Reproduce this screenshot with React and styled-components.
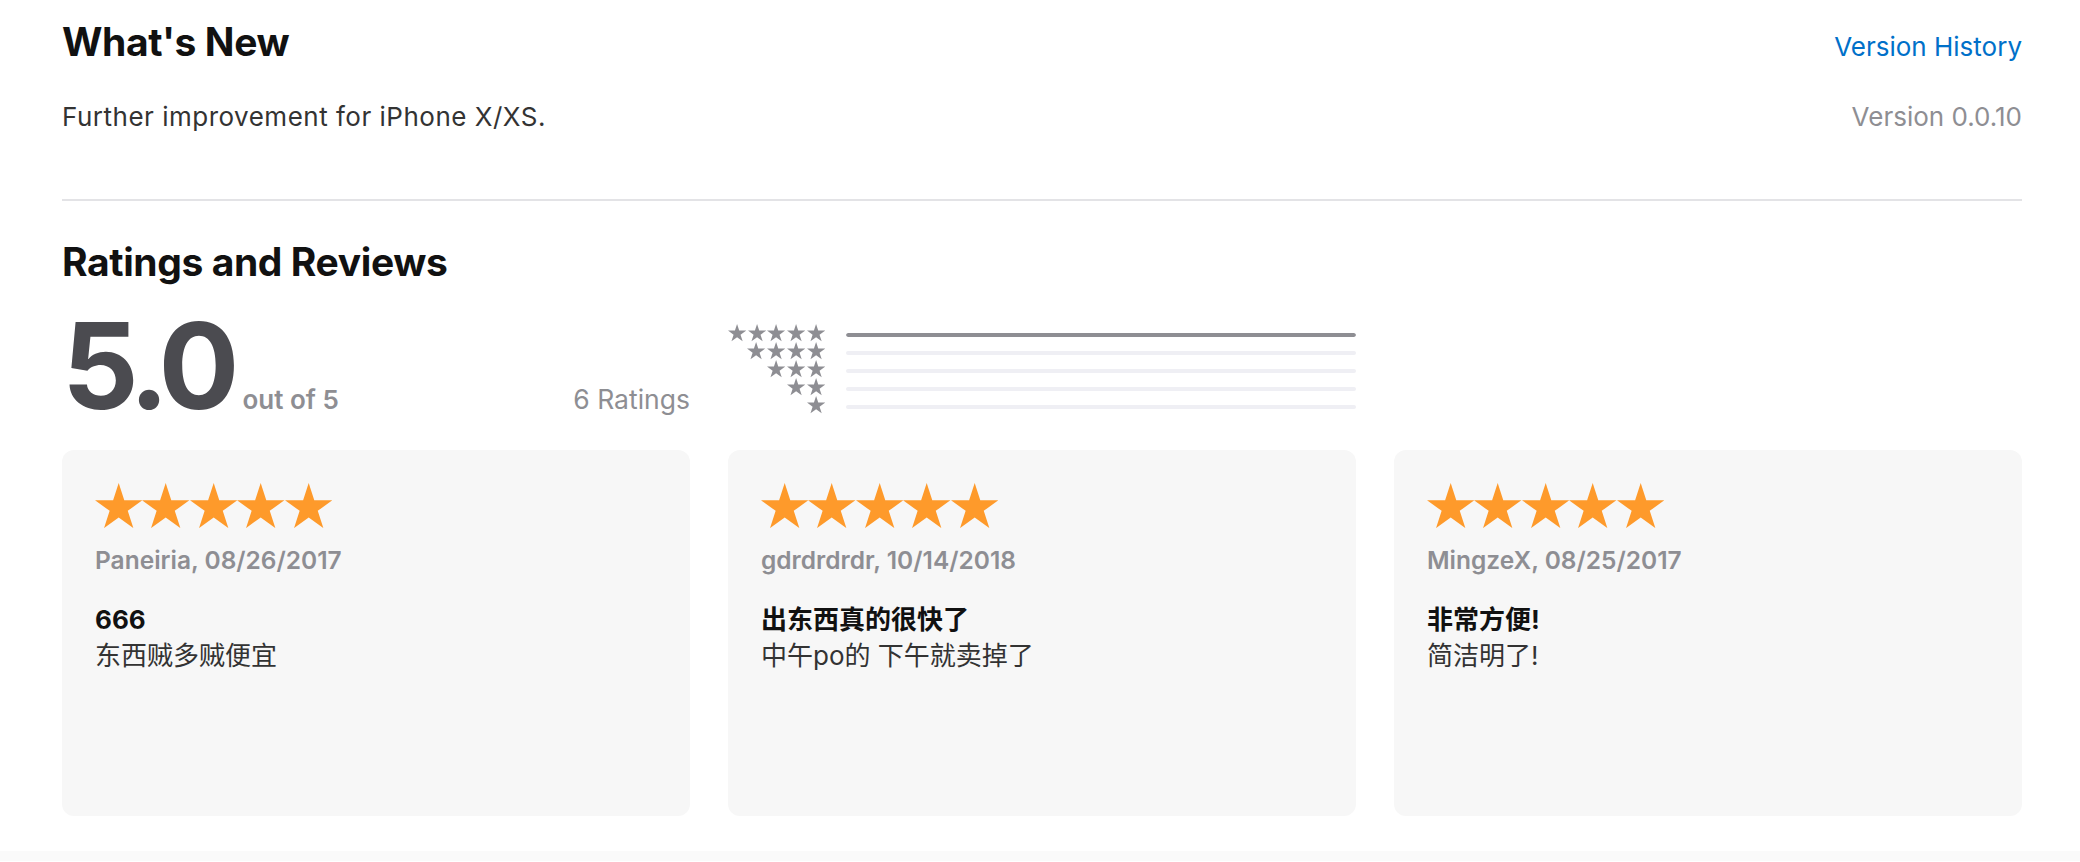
import React from "react";
import styled, { createGlobalStyle } from "styled-components";

const GlobalStyle = createGlobalStyle`
  html, body {
    margin: 0;
    padding: 0;
    background: #fff;
  }
  body {
    font-family: Inter, "Noto Sans CJK SC", sans-serif;
    -webkit-font-smoothing: antialiased;
  }
`;

const Page = styled.div`
  width: 1960px;
  margin-left: 62px;
  padding-top: 18px;
`;

const Section = styled.section`
  padding-bottom: ${({ pb }) => pb || 0}px;
  border-bottom: ${({ divider }) => (divider ? "2px solid #e3e3e6" : "none")};
`;

const Row = styled.div`
  display: flex;
  justify-content: space-between;
  align-items: baseline;
  margin-top: ${({ mt }) => mt || 0}px;
`;

const Heading = styled.h2`
  margin: ${({ mt }) => mt || 0}px 0 0;
  font-size: 39px;
  line-height: 48px;
  font-weight: 700;
  letter-spacing: -0.4px;
  color: #111;
`;

const Link = styled.a`
  font-size: 26px;
  line-height: 32px;
  color: #0070c9;
  text-decoration: none;
  cursor: pointer;
`;

const Body = styled.p`
  margin: 0;
  font-size: 26px;
  line-height: 32px;
  letter-spacing: 0.5px;
  color: #333;
`;

const Muted = styled.span`
  font-size: 26px;
  line-height: 32px;
  color: #8e8e93;
`;

const Summary = styled.div`
  display: grid;
  grid-template-columns: repeat(3, 1fr);
  column-gap: 38px;
  margin-top: 20px;
`;

const Average = styled.div`
  display: flex;
  align-items: baseline;
`;

const BigNumber = styled.span`
  font-size: 120px;
  line-height: 120px;
  font-weight: 700;
  letter-spacing: -7px;
  color: #4b4b50;
`;

const OutOf = styled.span`
  margin-left: 10px;
  font-size: 26px;
  font-weight: 600;
  color: #8e8e93;
`;

const Count = styled.span`
  margin-left: auto;
  font-size: 26.5px;
  color: #8e8e93;
`;

const Histogram = styled.div`
  display: grid;
  grid-template-columns: 97px 1fr;
  column-gap: 21px;
  margin-top: 20px;
  align-self: start;
`;

const StarCol = styled.div`
  display: flex;
  flex-direction: column;
  margin-top: -2px;
`;

const StarRow = styled.div`
  display: flex;
  justify-content: flex-end;
  align-items: center;
  gap: ${({ gap }) => gap || 0}px;
  height: ${({ h }) => h || "auto"};
`;

const BarCol = styled.div`
  display: flex;
  flex-direction: column;
`;

const BarSlot = styled.div`
  height: 18px;
  display: flex;
  align-items: center;
`;

const Track = styled.div`
  width: 100%;
  height: 4px;
  border-radius: 2px;
  background: #efeff4;
  overflow: hidden;
`;

const Fill = styled.div`
  height: 100%;
  background: #8e8e93;
  border-radius: 2px;
`;

const Cards = styled.div`
  display: grid;
  grid-template-columns: repeat(3, 1fr);
  column-gap: 38px;
  margin-top: 24px;
`;

const Card = styled.article`
  height: 366px;
  box-sizing: border-box;
  padding: 33px 33px;
  border-radius: 12px;
  background: #f7f7f7;
`;

const Stars = styled.div`
  display: flex;
  justify-content: flex-start;
`;

const Author = styled.div`
  margin-top: 16px;
  font-size: 24.5px;
  line-height: 32px;
  font-weight: 600;
  color: #8e8e93;
`;

const Title = styled.h3`
  margin: 26px 0 0;
  font-size: 26px;
  line-height: 36px;
  font-weight: 700;
  color: #111;
`;

const Text = styled.p`
  margin: 0;
  font-size: 26px;
  line-height: 36px;
  color: #333;
`;

const BottomBand = styled.div`
  margin-top: 35px;
  height: 10px;
  background: #fafafa;
`;

const Star = ({ size, color }) => (
  <svg
    width={size}
    height={size * 0.951}
    viewBox="-95.1 -100 190.2 180.9"
    style={{ display: "block" }}
  >
    <polygon
      fill={color}
      points="0,-100 22.45,-30.9 95.1,-30.9 36.33,11.8 58.8,80.9 0,38.2 -58.8,80.9 -36.33,11.8 -95.1,-30.9 -22.45,-30.9"
    />
  </svg>
);

const histogram = [
  { stars: 5, share: 1 },
  { stars: 4, share: 0 },
  { stars: 3, share: 0 },
  { stars: 2, share: 0 },
  { stars: 1, share: 0 },
];

const reviews = [
  { author: "Paneiria, 08/26/2017", title: "666", text: "东西贼多贼便宜" },
  { author: "gdrdrdrdr, 10/14/2018", title: "出东西真的很快了", text: "中午po的 下午就卖掉了" },
  { author: "MingzeX, 08/25/2017", title: "非常方便!", text: "简洁明了!" },
];

export default function App() {
  return (
    <>
      <GlobalStyle />
      <Page>
        <Section divider pb={66}>
          <Row>
            <Heading>What's New</Heading>
            <Link>Version History</Link>
          </Row>
          <Row mt={35}>
            <Body>Further improvement for iPhone X/XS.</Body>
            <Muted>Version 0.0.10</Muted>
          </Row>
        </Section>

        <Section>
          <Heading mt={37}>Ratings and Reviews</Heading>
          <Summary>
            <Average>
              <BigNumber>5.0</BigNumber>
              <OutOf>out of 5</OutOf>
              <Count>6 Ratings</Count>
            </Average>
            <Histogram>
              <StarCol>
                {histogram.map((row) => (
                  <StarRow key={row.stars} gap={1.6} h="18px">
                    {Array.from({ length: row.stars }).map((_, i) => (
                      <Star key={i} size={18.2} color="#8e8e93" />
                    ))}
                  </StarRow>
                ))}
              </StarCol>
              <BarCol>
                {histogram.map((row) => (
                  <BarSlot key={row.stars}>
                    <Track>
                      <Fill style={{ width: `${row.share * 100}%` }} />
                    </Track>
                  </BarSlot>
                ))}
              </BarCol>
            </Histogram>
          </Summary>

          <Cards>
            {reviews.map((r) => (
              <Card key={r.author}>
                <Stars>
                  {Array.from({ length: 5 }).map((_, i) => (
                    <Star key={i} size={47.4} color="#fe9a2b" />
                  ))}
                </Stars>
                <Author>{r.author}</Author>
                <Title>{r.title}</Title>
                <Text>{r.text}</Text>
              </Card>
            ))}
          </Cards>
        </Section>
      </Page>
      <BottomBand />
    </>
  );
}
